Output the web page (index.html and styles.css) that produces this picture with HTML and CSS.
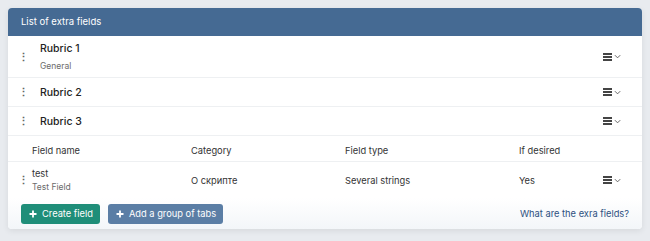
FILE: index.html
```html
<!DOCTYPE html>
<html>
<head>
<meta charset="UTF-8">
<title>List of extra fields</title>
<link rel="stylesheet" href="styles.css">
</head>
<body>
<div class="card">
	<div class="card_head">List of extra fields</div>

	<div class="rubric rubric_first">
		<span class="drag">&#8942;</span>
		<div class="rubric_text">
			<div class="rubric_name">Rubric 1</div>
			<div class="rubric_sub">General</div>
		</div>
		<span class="menu"><span class="bars"></span><svg width="8" height="5" viewBox="0 0 8 5"><path d="M1 1l3 3 3-3" fill="none" stroke="#555" stroke-width="1"/></svg></span>
	</div>
	<div class="rubric">
		<span class="drag">&#8942;</span>
		<div class="rubric_text"><div class="rubric_name">Rubric 2</div></div>
		<span class="menu"><span class="bars"></span><svg width="8" height="5" viewBox="0 0 8 5"><path d="M1 1l3 3 3-3" fill="none" stroke="#555" stroke-width="1"/></svg></span>
	</div>
	<div class="rubric">
		<span class="drag">&#8942;</span>
		<div class="rubric_text"><div class="rubric_name">Rubric 3</div></div>
		<span class="menu"><span class="bars"></span><svg width="8" height="5" viewBox="0 0 8 5"><path d="M1 1l3 3 3-3" fill="none" stroke="#555" stroke-width="1"/></svg></span>
	</div>

	<div class="fields_head">
		<span class="col_name">Field name</span>
		<span class="col_cat">Category</span>
		<span class="col_type">Field type</span>
		<span class="col_req">If desired</span>
	</div>
	<div class="field_row">
		<span class="drag">&#8942;</span>
		<div class="col_name2">
			<div class="field_title">test</div>
			<div class="rubric_sub">Test Field</div>
		</div>
		<span class="col_cat">О скрипте</span>
		<span class="col_type">Several strings</span>
		<span class="col_req">Yes</span>
		<span class="menu"><span class="bars"></span><svg width="8" height="5" viewBox="0 0 8 5"><path d="M1 1l3 3 3-3" fill="none" stroke="#555" stroke-width="1"/></svg></span>
	</div>

	<div class="card_foot">
		<span class="button button_green"><svg class="plus" width="8" height="8" viewBox="0 0 8 8"><path d="M4 0.5v7M0.5 4h7" stroke="#fff" stroke-width="1.8"/></svg>Create field</span>
		<span class="button button_blue"><svg class="plus" width="8" height="8" viewBox="0 0 8 8"><path d="M4 0.5v7M0.5 4h7" stroke="#fff" stroke-width="1.8"/></svg>Add a group of tabs</span>
		<a class="help" href="#">What are the exra fields?</a>
	</div>
</div>
</body>
</html>
```

FILE: styles.css
```css
body {
  margin: 0;
  padding: 8px;
  background-color: #e8ebef;
  font-family: Inter, "Liberation Sans", sans-serif;
  color: #222;
}

.card {
  background-color: #fff;
  border-radius: 4px;
  overflow: hidden;
  box-shadow: 0 2px 6px rgba(0,0,0,0.08);
}

.card_head {
  background-color: #456a93;
  color: #fff;
  font-size: 9.5px;
  height: 28px;
  line-height: 27px;
  padding-left: 13px;
}

.rubric {
  display: flex;
  align-items: center;
  height: 28px;
  border-bottom: 1px solid #eef0f2;
  padding-left: 10px;
}

.rubric_first {
  height: 41px;
}

.drag {
  width: 8px;
  font-size: 11px;
  font-weight: bold;
  color: #666;
  text-align: center;
}

.rubric_text {
  flex: 1;
  margin-left: 14px;
}

.rubric_name {
  font-size: 10.5px;
  font-weight: 500;
  color: #222;
}

.rubric_first .rubric_name {
  margin-bottom: 6px;
}

.rubric_sub {
  font-size: 8.5px;
  color: #6b6b6b;
}

.field_title {
  margin-bottom: 3px;
}

.menu {
  display: flex;
  align-items: center;
  gap: 2px;
  width: 18px;
  margin-right: 21px;
}

.bars {
  width: 10px;
  height: 2px;
  background-color: #444;
  box-shadow: 0 3px 0 #444, 0 -3px 0 #444;
}

.fields_head, .field_row {
  display: flex;
  align-items: center;
  font-size: 9.3px;
  color: #333;
  border-bottom: 1px solid #eef0f2;
}

.fields_head {
  height: 22px;
  padding: 3px 0 0 24px;
}

.field_row {
  height: 36px;
  padding-left: 10px;
  border-bottom: none;
}

.col_name {
  width: 159px;
}

.col_name2 {
  width: 159px;
  margin-left: 6px;
}

.col_cat {
  width: 154px;
}

.col_type {
  width: 174px;
}

.col_req {
  flex: 1;
}

.card_foot {
  display: flex;
  align-items: center;
  gap: 8px;
  height: 31px;
  padding: 0 13px;
  background: linear-gradient(#fff, #f3f6f9);
}

.button {
  display: inline-flex;
  align-items: center;
  color: #fff;
  font-size: 9.3px;
  height: 20px;
  padding: 0 7px 0 8px;
  border-radius: 3px;
}

.plus {
  margin-right: 5px;
}

.button_green {
  background-color: #1f8e79;
}

.button_blue {
  background-color: #5b7ea5;
}

.help {
  margin-left: auto;
  color: #2d5080;
  font-size: 9.3px;
  text-decoration: none;
}
```
